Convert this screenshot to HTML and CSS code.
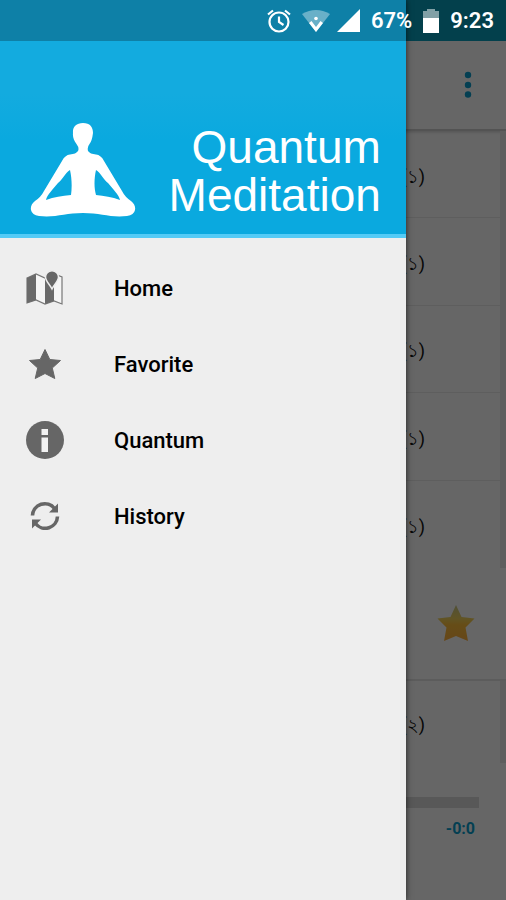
FILE: index.html
```html
<!DOCTYPE html>
<html lang="en">
<head>
<meta charset="utf-8">
<meta name="viewport" content="width=device-width, initial-scale=1">
<title>Quantum Meditation</title>
<link rel="stylesheet" href="styles.css">
</head>
<body>
<div class="screen">
  <main class="app">
    <header class="toolbar">
      <button class="more" type="button" aria-label="More options">
        <svg width="8" height="28" viewBox="0 0 8 28"><circle cx="4" cy="4" r="3.2"/><circle cx="4" cy="14" r="3.2"/><circle cx="4" cy="23.5" r="3.2"/></svg>
      </button>
    </header>
    <ul class="tracks">
      <li>(১)</li>
      <li>(১)</li>
      <li>(১)</li>
      <li>(১)</li>
      <li>(১)</li>
    </ul>
    <div class="rating">
      <button class="star" type="button" aria-label="Add to favorites">
        <svg width="38" height="38" viewBox="0 0 38 38">
          <defs><linearGradient id="gold" x1="0" y1="0" x2="0" y2="1"><stop offset="0" stop-color="#c9c98a"/><stop offset=".38" stop-color="#f2d25c"/><stop offset=".55" stop-color="#ffc03a"/><stop offset="1" stop-color="#ffb040"/></linearGradient></defs>
          <path fill="url(#gold)" d="M19 0l5.500 12 13 1.500-9 9L31 36l-12-5-12 5 2.500-13.500-9-9 13-1.500z"/>
        </svg>
      </button>
    </div>
    <ul class="tracks next">
      <li>(২)</li>
    </ul>
    <footer class="player">
      <div class="bar"></div>
      <span class="time">-0:0</span>
    </footer>
  </main>
  <div class="scrim"></div>
  <aside class="drawer">
    <header class="banner">
      <svg class="figure" width="106" height="94" viewBox="0 0 106 94" fill="#fff">
        <path fill-rule="evenodd" d="M53 0C46 0 42.5 4 43 10C42.5 14 44 18 46.5 21Q49.5 25 48 28Q46 31 40 31.5Q35 32 32 38L14 68Q11 74 5 78Q0 82 1 87Q2 92 9 93C25 95 35 90 53 90C71 90 81 95 97 93Q104 92 105 87Q106 82 101 78Q95 74 92 68L74 38Q71 32 66 31.5Q60 31 58 28Q57 24 59.5 21Q62 18 63 10C63 4 60 0 53 0ZM40 47C42 56 42 65 41 72C32 73 24 74 16 77C17 72 23 66 28 60C33 56 35 50 40 47ZM66 47C71 50 73 56 78 60C83 66 89 72 90 77C82 74 74 73 66 72C64 65 64 56 66 47Z"/>
      </svg>
      <h1>Quantum<br>Meditation</h1>
    </header>
    <nav class="menu">
      <a href="#home">
        <svg width="38" height="38" viewBox="0 0 38 38">
          <path fill="#f5f5f5" stroke="#777" stroke-width="1.2" d="M1 9l9-4 9 4 9-4 8 3v27l-8-3-9 3-9-4-9 3z"/>
          <path fill="#6a6a6a" d="M1 9l9-4v26l-9 3zM19 9l9-4v27l-9 3z"/>
          <path fill="#666" stroke="#eee" stroke-width="1.5" d="M26 1.8c-3.8 0-6.5 2.7-6.5 6.2 0 4.3 4 7 6.5 12 2.5-5 6.5-7.7 6.5-12 0-3.5-2.7-6.2-6.5-6.2z"/>
        </svg>
        <span>Home</span>
      </a>
      <a href="#favorite">
        <svg width="38" height="38" viewBox="0 0 38 38"><path fill="#666" stroke="#666" stroke-linejoin="round" d="M19 4.500l4.800 10 10.700 1-8.200 7.500 2.500 10.500L19 28.500l-9.800 5 2.500-10.500L3.500 15.500l10.700-1z"/></svg>
        <span>Favorite</span>
      </a>
      <a href="#quantum">
        <svg width="38" height="38" viewBox="0 0 38 38"><circle cx="19" cy="19" r="19" fill="#666"/><path fill="#f2f2f2" d="M15.5 8H22v6h-6.5zM15.5 16.5H22V31h-6.5z"/></svg>
        <span>Quantum</span>
      </a>
      <a href="#history">
        <svg width="38" height="38" viewBox="0 0 38 38">
          <g fill="none" stroke="#666" stroke-width="3.6"><path d="M6.5 18.5A12.3 12.3 0 0 1 28.5 11.5"/><path d="M31.5 19.5A12.3 12.3 0 0 1 9.5 26.5"/></g>
          <path fill="#666" d="M32 6.5V15.5H23zM6 31.5V22.5H15z"/>
        </svg>
        <span>History</span>
      </a>
    </nav>
  </aside>
  <div class="status">
    <svg width="24" height="24" viewBox="0 0 24 24" fill="none" stroke="#fff" stroke-width="2.2"><circle cx="12" cy="13" r="9.5"/><path d="M12 7.5V13l4.5 3M1 5.5L6 1.5M23 5.5L18 1.5"/></svg>
    <div class="signals">
      <svg width="28" height="22" viewBox="0 0 28 22"><path fill="#fff" fill-opacity=".38" d="M0 4Q14-4 28 4L14 22z"/><path fill="#fff" d="M7 13L14 22 21 13 18.5 11 14 17 9.5 11z"/><circle cx="14" cy="8.5" r="1.8" fill="#fff"/></svg>
      <svg width="23" height="23" viewBox="0 0 23 23"><path fill="#fff" d="M23 0v23H0z"/></svg>
    </div>
    <span>67%</span>
    <svg width="16" height="24" viewBox="0 0 16 24"><path fill="#fff" fill-opacity=".5" d="M4 0h8v2h4v7H0V2h4z"/><path fill="#fff" d="M0 9h16v15H0z"/></svg>
    <span>9:23</span>
  </div>
</div>
</body>
</html>
```

FILE: styles.css
```css
* {
  box-sizing: border-box;
}

body {
  margin: 0;
  font-family: Roboto, "Noto Sans", sans-serif;
}

.screen {
  position: relative;
  display: grid;
  min-height: 100vh;
  overflow: hidden;
}

.app,
.scrim,
.drawer {
  grid-area: 1 / 1;
}

button {
  display: flex;
  padding: 0;
  border: 0;
  background: none;
}

.app {
  display: flex;
  flex-direction: column;
  background: #fff;
}

.toolbar {
  display: flex;
  justify-content: flex-end;
  align-items: center;
  height: 131px;
  padding-right: 34px;
  border-top: 41px solid #0cd6ff;
  border-bottom: 2px solid #d0d0d0;
  box-shadow: 0 1px 3px #0003;
}

.more {
  fill: #0a9fce;
}

.tracks {
  display: grid;
  grid-auto-rows: 1fr;
  height: 437px;
  margin: 0;
  padding: 0;
  list-style: none;
  border-right: 6px solid #ececec;
}

.tracks li {
  display: flex;
  align-items: center;
  justify-content: flex-end;
  padding: 8px 75px 0 0;
  border-bottom: 1px solid #ececec;
  color: #111;
  font-size: 18px;
}

.tracks li:last-child {
  border-bottom: 0;
}

.rating {
  display: flex;
  justify-content: flex-end;
  align-items: center;
  height: 113px;
  padding-right: 31px;
  border-bottom: 2px solid #e6e6e6;
}

.tracks.next {
  height: 82px;
}

.player {
  display: flex;
  flex-direction: column;
  align-items: flex-end;
  gap: 11px;
  padding: 34px 27px 0 0;
}

.bar {
  width: 90%;
  height: 11px;
  background: #dcdcdc;
}

.time {
  padding-right: 4px;
  color: #0a9fce;
  font-size: 16px;
  font-weight: 700;
  line-height: 20px;
}

.scrim {
  z-index: 1;
  background: rgba(0, 0, 0, 0.6);
}

.drawer {
  z-index: 2;
  width: 80.2%;
  background: #eee;
  box-shadow: 0 0 6px #000a;
}

.banner {
  display: flex;
  justify-content: space-between;
  align-items: flex-end;
  height: 238px;
  padding: 0 25px 17px 30px;
  border-bottom: 4px solid #54cbf6;
  background: linear-gradient(#13abdf 40%, #0aa9df 60%);
}

.banner h1 {
  margin: 0 0 -2px;
  color: #fff;
  font: 400 46px/48px "Liberation Sans", sans-serif;
  text-align: right;
}

.figure {
  flex: none;
}

.menu {
  display: flex;
  flex-direction: column;
  padding-top: 12px;
}

.menu a {
  display: flex;
  align-items: center;
  gap: 50px;
  height: 76px;
  padding-left: 26px;
  color: #000;
  font-size: 22px;
  font-weight: 500;
  text-decoration: none;
}

.status {
  position: absolute;
  inset: 0 0 auto;
  z-index: 3;
  display: flex;
  justify-content: flex-end;
  align-items: center;
  gap: 11px;
  height: 41px;
  padding-right: 12px;
  background: rgba(0, 0, 0, 0.25);
  color: #fff;
  font-size: 22px;
  font-weight: 600;
}

.signals {
  display: flex;
  align-items: center;
  gap: 7px;
}
```
